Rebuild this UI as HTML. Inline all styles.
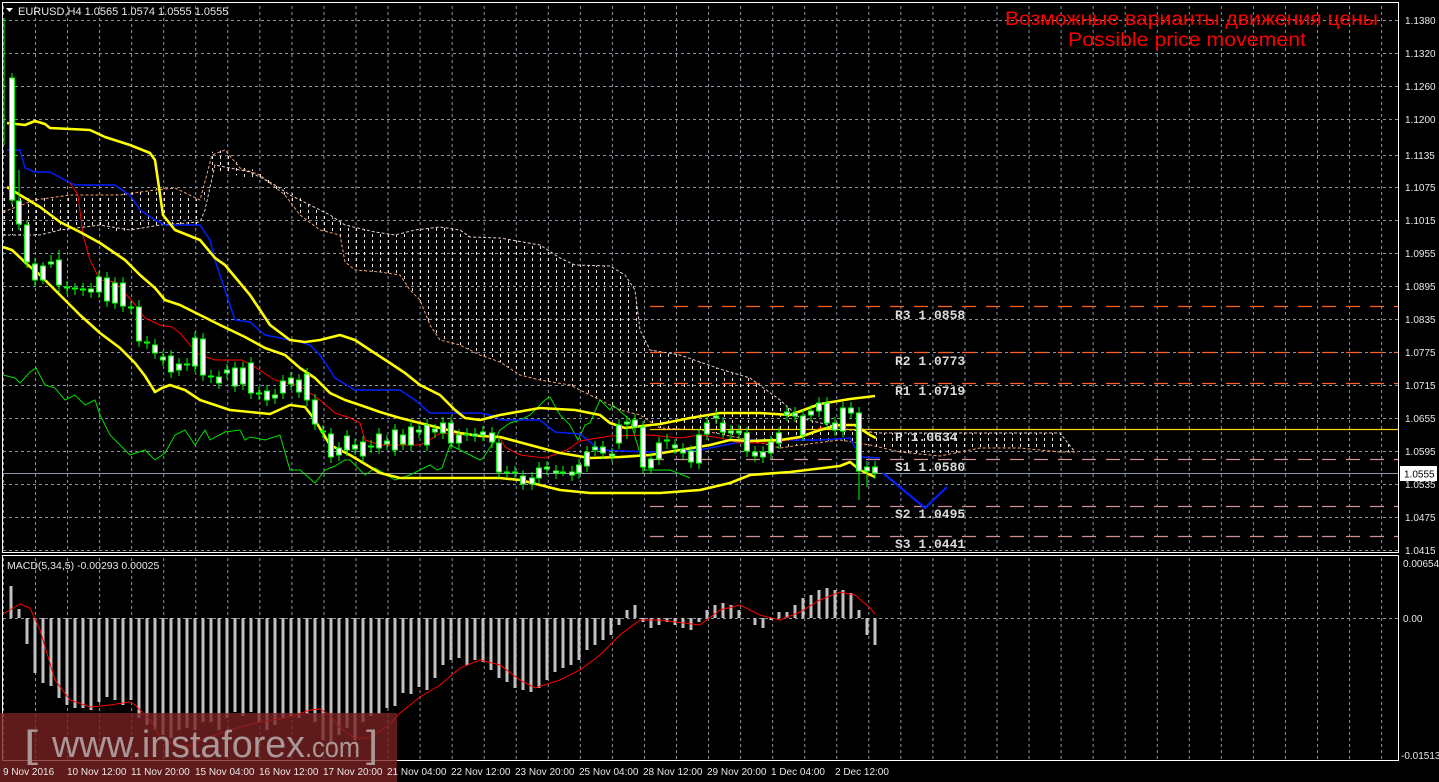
<!DOCTYPE html>
<html><head><meta charset="utf-8"><style>
html,body{margin:0;padding:0;background:#000;}
svg{display:block;font-family:"Liberation Sans",sans-serif;}
</style></head><body>
<svg width="1439" height="782" viewBox="0 0 1439 782" xmlns="http://www.w3.org/2000/svg">
<defs>
<pattern id="vg" patternUnits="userSpaceOnUse" x="35" y="0" width="32.05" height="782">
<line x1="0.5" y1="0" x2="0.5" y2="782" stroke="#8a96a6" stroke-width="1" stroke-dasharray="3,3"/>
</pattern>
<pattern id="hatch" patternUnits="userSpaceOnUse" x="0" y="0" width="8" height="6">
<line x1="4.5" y1="0" x2="4.5" y2="3" stroke="#ece4e0" stroke-width="1"/>
</pattern>
</defs>
<rect width="1439" height="782" fill="#000"/>
<rect x="3" y="3" width="1395" height="549" fill="url(#vg)"/>
<rect x="3" y="556" width="1395" height="204" fill="url(#vg)"/>
<g stroke="#8a96a6" stroke-width="1" stroke-dasharray="3,3">
<line x1="3" x2="1398" y1="20.5" y2="20.5"/><line x1="3" x2="1398" y1="53.5" y2="53.5"/><line x1="3" x2="1398" y1="86.5" y2="86.5"/><line x1="3" x2="1398" y1="119.5" y2="119.5"/><line x1="3" x2="1398" y1="155.5" y2="155.5"/><line x1="3" x2="1398" y1="187.5" y2="187.5"/><line x1="3" x2="1398" y1="220.5" y2="220.5"/><line x1="3" x2="1398" y1="253.5" y2="253.5"/><line x1="3" x2="1398" y1="286.5" y2="286.5"/><line x1="3" x2="1398" y1="319.5" y2="319.5"/><line x1="3" x2="1398" y1="352.5" y2="352.5"/><line x1="3" x2="1398" y1="385.5" y2="385.5"/><line x1="3" x2="1398" y1="418.5" y2="418.5"/><line x1="3" x2="1398" y1="451.5" y2="451.5"/><line x1="3" x2="1398" y1="484.5" y2="484.5"/><line x1="3" x2="1398" y1="517.5" y2="517.5"/><line x1="3" x2="1398" y1="550.5" y2="550.5"/>
<line x1="3" x2="1398" y1="618.5" y2="618.5"/>
</g>
<polygon points="3,195 30,195 60,200 70,195 110,195 150,190 160,187 200,200 205,190 210,152 225,150 240,165 260,172 280,185 300,198 320,210 345,225 375,232 395,235 415,230 440,227 460,230 470,237 500,238 540,245 560,258 575,265 610,266 625,275 635,290 640,330 650,350 680,355 720,369 750,378 780,400 800,418 850,430 880,433 1060,433 1075,452 1020,448 980,448 940,456 900,452 870,445 840,440 800,445 780,448 750,440 700,430 660,428 645,420 640,415 620,410 600,400 570,385 540,380 520,375 500,362 480,355 460,345 440,340 430,325 420,300 410,290 400,275 380,272 355,270 345,262 340,235 320,230 300,215 285,195 260,180 235,175 213,170 208,180 200,225 160,225 130,230 115,232 100,225 60,230 40,235 3,235" fill="url(#hatch)" stroke="none"/>
<polyline points="3,212 35,200 70,195 120,195 155,190 175,188 200,200 208,170 212,155 225,150 240,168 260,175 285,195 300,215 320,230 340,235 345,262 355,270 380,272 400,275 410,290 420,300 430,325 440,340 460,345 480,355 500,362 520,375 540,380 570,385 600,400 620,410 640,415 660,428 700,430 750,440 780,448 800,445 840,440 870,445 900,452 940,456 980,448 1020,448 1060,452 1075,452" fill="none" stroke="#f0a070" stroke-width="1" stroke-dasharray="3,2"/>
<polyline points="3,235 40,235 60,230 100,225 130,230 160,225 200,222 205,210 215,165 250,172 275,185 290,195 310,205 330,215 345,225 375,232 395,235 415,230 440,227 460,230 470,237 500,238 540,245 560,258 575,265 610,266 625,275 635,290 640,330 650,350 680,355 720,369 750,378 780,400 800,418 850,430 880,433 1060,433 1075,452" fill="none" stroke="#e8d0c8" stroke-width="1" stroke-dasharray="3,2"/>
<g stroke-width="1.3" stroke-dasharray="14,10">
<line x1="650" x2="1398" y1="306.5" y2="306.5" stroke="#ff6020"/>
<line x1="650" x2="1398" y1="352.5" y2="352.5" stroke="#ff6020"/>
<line x1="650" x2="1398" y1="383.5" y2="383.5" stroke="#ff6020"/>
<line x1="650" x2="1398" y1="459.5" y2="459.5" stroke="#d09090"/>
<line x1="650" x2="1398" y1="506.5" y2="506.5" stroke="#d09090"/>
<line x1="650" x2="1398" y1="536.5" y2="536.5" stroke="#d09090"/>
</g>
<line x1="650" x2="1398" y1="429.5" y2="429.5" stroke="#ffd000" stroke-width="1.2"/>
<line x1="3" x2="1398" y1="473.5" y2="473.5" stroke="#8a96a6" stroke-width="1"/>
<polyline points="3,375 15,378 20,383 30,372 36,368 45,385 55,388 65,400 75,395 85,405 95,400 100,415 110,435 120,445 130,455 145,450 155,460 165,453 175,435 185,430 195,445 205,430 210,440 225,432 240,430 245,440 250,437 265,440 280,435 290,470 300,470 315,483 325,470 335,466 345,460 350,460 355,465 365,475 375,468 382,472 395,480 410,475 420,470 430,465 437,470 442,468 450,445 460,450 480,460 483,458 495,440 500,430 510,423 520,420 530,415 545,400 550,397 560,415 570,425 578,440 585,425 590,423 600,400 610,410 613,405 630,420 645,470 670,470 690,478" fill="none" stroke="#00e000" stroke-width="1"/>
<polyline points="7,150 20,150 25,168 35,172 50,172 65,180 75,185 115,185 125,192 130,195 140,210 155,220 165,225 200,225 210,240 215,260 225,290 235,320 250,322 265,335 300,342 310,345 320,355 330,370 335,378 355,390 400,390 415,400 430,413 480,413 495,416 500,420 540,420 555,432 580,434 600,450 650,452 700,450 750,440 820,440 850,438 860,457 880,458" fill="none" stroke="#0020ff" stroke-width="1.5"/>
<polyline points="70,183 78,195 83,235 90,260 100,280 115,282 133,302 145,318 160,325 172,327 180,333 190,345 200,355 215,360 242,360 255,367 275,380 300,386 320,400 335,413 350,418 360,423 365,440 380,445 420,445 430,440 440,433 500,438 505,447 520,455 545,458 567,450 580,441 610,436 650,435 680,438 700,435 720,438 740,443 770,443 800,438 820,428 840,426 855,425 862,445" fill="none" stroke="#ff0000" stroke-width="1"/>
<g fill="none" stroke="#ffff00" stroke-width="2.6" stroke-linejoin="round">
<polyline points="7,123 25,125 35,121 45,124 50,128 90,130 105,137 130,145 150,153 155,160 163,215 175,230 200,240 215,258 225,265 250,295 260,310 270,325 290,340 305,342 320,340 340,335 355,340 370,350 390,363 405,373 420,385 440,395 455,410 465,418 480,420 500,415 540,408 575,410 600,415 610,423 625,428 660,424 690,418 720,413 760,413 790,415 820,404 850,399 875,396"/>
<polyline points="7,187 20,195 40,207 60,222 80,232 100,243 125,260 140,275 155,288 165,300 180,305 200,315 220,325 245,337 265,348 285,355 300,368 315,378 330,393 345,400 360,405 380,412 400,418 420,423 440,428 460,433 480,436 500,437 530,445 560,453 590,458 620,457 650,455 680,450 710,445 730,440 750,441 780,440 800,437 820,430 840,425 855,425 870,435 876,438"/>
<polyline points="3,247 12,250 28,265 40,275 60,295 80,315 100,333 120,348 135,363 145,376 155,392 162,388 170,385 185,390 200,400 230,410 260,413 270,414 290,405 305,407 315,420 330,445 350,455 380,473 400,478 500,478 520,480 540,485 560,490 590,493 660,493 700,490 730,483 750,475 790,472 840,466 850,462 860,470 875,477"/>
</g>
<path fill="none" stroke="#00ff00" stroke-width="1" d="M4,18V145M12,73V205M19,170V230M27,220V268M35,258V286M43,262V284M51,255V268M59,250V292M67,281V294M75,283V295M83,283V296M91,283V298M99,271V298M107,272V307M115,277V309M123,277V312M131,301V314M139,300V347M147,336V349M155,339V359M163,351V366M171,350V378M179,358V376M187,358V371M195,332V372M203,333V381M211,370V383M219,371V389M227,364V379M235,362V392M243,362V390M251,357V399M259,387V400M267,385V406M275,389V404M283,375V399M291,372V390M299,374V398M307,368V406M315,394V430M323,425V438M331,428V463M339,442V461M347,430V456M355,439V455M363,436V462M371,440V453M379,428V454M387,435V450M395,424V456M403,429V450M411,421V451M419,424V438M427,419V451M435,424V438M443,417V439M451,417V449M459,429V449M467,428V441M475,428V442M483,426V441M492,427V448M499,437V478M507,466V478M515,466V478M523,470V490M532,472V490M539,462V484M547,461V475M556,465V479M563,466V476M572,466V481M579,459V479M587,446V472M595,441V456M603,441V459M612,448V462M619,419V449M627,416V439M635,414V433M643,421V473M651,453V474M659,437V465M667,434V449M675,439V454M683,443V459M691,445V468M699,429V469M707,417V440M716,410V424M723,417V438M731,425V439M739,425V439M747,427V457M755,446V462M763,446V463M771,436V459M779,427V449M787,406V421M795,407V422M803,410V441M811,405V421M819,397V417M827,397V429M835,417V436M843,402V437M851,402V419M859,407V500M867,461V487M875,461V479"/>
<path fill="#fff" stroke="#00ff00" stroke-width="1" d="M9.5,78h5v122h-5zM16.5,201h5v23h-5zM24.5,225h5v37h-5zM32.5,264h5v16h-5zM40.5,266h5v14h-5zM48.5,262h5v2h-5zM56.5,260h5v25h-5zM64.5,287h5v1h-5zM72.5,288h5v1h-5zM80.5,289h5v1h-5zM88.5,289h5v3h-5zM96.5,277h5v15h-5zM104.5,278h5v23h-5zM112.5,283h5v20h-5zM120.5,283h5v23h-5zM128.5,307h5v1h-5zM136.5,307h5v34h-5zM144.5,342h5v1h-5zM152.5,345h5v8h-5zM160.5,357h5v3h-5zM168.5,356h5v16h-5zM176.5,364h5v6h-5zM184.5,364h5v1h-5zM192.5,338h5v28h-5zM200.5,339h5v36h-5zM208.5,376h5v1h-5zM216.5,377h5v6h-5zM224.5,370h5v3h-5zM232.5,368h5v18h-5zM240.5,368h5v16h-5zM248.5,363h5v30h-5zM256.5,393h5v1h-5zM264.5,391h5v9h-5zM272.5,395h5v3h-5zM280.5,381h5v12h-5zM288.5,378h5v6h-5zM296.5,380h5v12h-5zM304.5,374h5v26h-5zM312.5,400h5v24h-5zM320.5,431h5v1h-5zM328.5,434h5v23h-5zM336.5,448h5v7h-5zM344.5,436h5v14h-5zM352.5,445h5v4h-5zM360.5,442h5v14h-5zM368.5,446h5v1h-5zM376.5,434h5v14h-5zM384.5,441h5v3h-5zM392.5,430h5v20h-5zM400.5,435h5v9h-5zM408.5,427h5v18h-5zM416.5,430h5v2h-5zM424.5,425h5v20h-5zM432.5,429h5v3h-5zM440.5,423h5v10h-5zM448.5,423h5v20h-5zM456.5,435h5v8h-5zM464.5,434h5v1h-5zM472.5,434h5v2h-5zM480.5,432h5v3h-5zM489.5,433h5v9h-5zM496.5,443h5v29h-5zM504.5,472h5v1h-5zM512.5,472h5v1h-5zM520.5,476h5v8h-5zM529.5,478h5v6h-5zM536.5,468h5v10h-5zM544.5,467h5v2h-5zM553.5,471h5v2h-5zM560.5,472h5v1h-5zM569.5,472h5v3h-5zM576.5,465h5v8h-5zM584.5,452h5v14h-5zM592.5,447h5v3h-5zM600.5,447h5v6h-5zM609.5,454h5v2h-5zM616.5,425h5v18h-5zM624.5,422h5v2h-5zM632.5,420h5v7h-5zM640.5,427h5v40h-5zM648.5,459h5v9h-5zM656.5,443h5v16h-5zM664.5,440h5v1h-5zM672.5,445h5v3h-5zM680.5,449h5v4h-5zM688.5,451h5v11h-5zM696.5,435h5v28h-5zM704.5,423h5v11h-5zM713.5,416h5v2h-5zM720.5,423h5v9h-5zM728.5,431h5v2h-5zM736.5,431h5v2h-5zM744.5,433h5v18h-5zM752.5,452h5v4h-5zM760.5,452h5v5h-5zM768.5,442h5v11h-5zM776.5,433h5v10h-5zM784.5,412h5v3h-5zM792.5,413h5v3h-5zM800.5,416h5v19h-5zM808.5,411h5v4h-5zM816.5,403h5v8h-5zM824.5,403h5v20h-5zM832.5,423h5v7h-5zM840.5,408h5v23h-5zM848.5,408h5v5h-5zM856.5,413h5v58h-5zM864.5,467h5v4h-5zM872.5,467h5v6h-5z"/>
<polyline points="883,473 925,508 947,487" fill="none" stroke="#0020ff" stroke-width="2.2"/>
<g style="font-family:'Liberation Mono',monospace;font-size:13px;font-weight:bold" fill="#dcdcdc">
<text x="895" y="319">R3 1.0858</text>
<text x="895" y="365">R2 1.0773</text>
<text x="895" y="395">R1 1.0719</text>
<text x="895" y="441"> P 1.0634</text>
<text x="895" y="471">S1 1.0580</text>
<text x="895" y="518">S2 1.0495</text>
<text x="895" y="548">S3 1.0441</text>
</g>
<path fill="none" stroke="#c0c0c0" stroke-width="3" d="M11,618V586M19,618V609M27,618V644M35,618V673M43,618V683M51,618V686M59,618V698M67,618V705M75,618V708M83,618V708M91,618V710M99,618V702M107,618V697M115,618V700M123,618V705M131,618V700M139,618V718M147,618V725M155,618V730M163,618V735M171,618V738M179,618V730M187,618V728M195,618V730M203,618V722M211,618V722M219,618V730M227,618V718M235,618V712M243,618V716M251,618V712M259,618V722M267,618V730M275,618V725M283,618V718M291,618V716M299,618V718M307,618V714M315,618V722M323,618V740M331,618V745M339,618V735M347,618V728M355,618V740M363,618V722M371,618V716M379,618V714M387,618V708M395,618V706M403,618V693M411,618V694M419,618V687M427,618V690M435,618V678M443,618V665M451,618V660M459,618V658M467,618V665M475,618V660M483,618V662M491,618V670M499,618V678M507,618V682M515,618V688M523,618V690M531,618V692M539,618V688M547,618V680M555,618V672M563,618V668M571,618V665M579,618V660M587,618V650M595,618V645M603,618V640M611,618V635M619,618V625M627,618V610M635,618V605M643,618V622M651,618V628M659,618V625M667,618V622M675,618V625M683,618V628M691,618V630M699,618V622M707,618V610M715,618V605M723,618V603M731,618V605M739,618V610M747,618V618M755,618V625M763,618V628M771,618V620M779,618V612M787,618V612M795,618V605M803,618V598M811,618V595M819,618V590M827,618V588M835,618V590M843,618V590M851,618V593M859,618V610M867,618V635M875,618V645"/>
<polyline points="3,614 20,604 30,608 40,630 55,680 70,700 90,707 100,706 110,705 130,702 135,705 150,720 160,737 175,745 190,746 200,740 230,730 260,722 290,717 310,710 320,709 330,715 340,728 355,738 370,738 390,724 400,713 420,697 440,685 460,668 480,660 500,665 520,680 535,688 560,680 580,670 600,655 620,635 640,620 660,620 700,625 720,610 740,605 760,615 780,620 800,612 820,600 840,592 855,595 870,608 875,614" fill="none" stroke="#ff0000" stroke-width="1"/>
<text x="7" y="569" font-size="10.5" fill="#e8e8e8">MACD(5,34,5) -0.00293 0.00025</text>
<rect x="2.5" y="2.5" width="1396" height="550" fill="none" stroke="#fff" stroke-width="1"/>
<rect x="2.5" y="555.5" width="1396" height="205" fill="none" stroke="#fff" stroke-width="1"/>
<rect x="0" y="713" width="397" height="69" fill="#7a2222" fill-opacity="0.78"/>
<g fill="#aa9898">
<text x="24" y="757" font-size="38" textLength="14" lengthAdjust="spacingAndGlyphs">[</text>
<text x="52" y="757" font-size="38" textLength="253" lengthAdjust="spacingAndGlyphs">www.instaforex</text>
<text x="305" y="757" font-size="29" textLength="55" lengthAdjust="spacingAndGlyphs">.com</text>
<text x="366" y="757" font-size="38" textLength="12" lengthAdjust="spacingAndGlyphs">]</text>
</g>
<polygon points="6,8 13,8 9.5,12" fill="#fff"/>
<text x="18" y="15" font-size="11" fill="#e8e8e8">EURUSD,H4  1.0565 1.0574 1.0555 1.0555</text>
<text x="1005" y="25" font-size="19" fill="#ff0000" textLength="373" lengthAdjust="spacingAndGlyphs">Возможные варианты движения цены</text>
<text x="1068" y="46" font-size="19" fill="#ff0000" textLength="238" lengthAdjust="spacingAndGlyphs">Possible price movement</text>
<g font-size="10" fill="#e8e8e8">
<text x="1405" y="24">1.1380</text><text x="1405" y="57">1.1320</text><text x="1405" y="90">1.1260</text><text x="1405" y="123">1.1200</text><text x="1405" y="159">1.1135</text><text x="1405" y="191">1.1075</text><text x="1405" y="224">1.1015</text><text x="1405" y="257">1.0955</text><text x="1405" y="290">1.0895</text><text x="1405" y="323">1.0835</text><text x="1405" y="356">1.0775</text><text x="1405" y="389">1.0715</text><text x="1405" y="422">1.0655</text><text x="1405" y="455">1.0595</text><text x="1405" y="488">1.0535</text><text x="1405" y="521">1.0475</text><text x="1405" y="554">1.0415</text>
<text x="1403" y="567">0.00654</text><text x="1403" y="622">0.00</text><text x="1401" y="759">-0.01513</text>
</g>
<rect x="1400" y="466" width="37" height="15" fill="#fff"/>
<text x="1404" y="477.5" font-size="10" fill="#000">1.0555</text>
<g font-size="10" fill="#e8e8e8">
<text x="3" y="775">9 Nov 2016</text><text x="67" y="775">10 Nov 12:00</text><text x="131" y="775">11 Nov 20:00</text><text x="195" y="775">15 Nov 04:00</text><text x="259" y="775">16 Nov 12:00</text><text x="323" y="775">17 Nov 20:00</text><text x="387" y="775">21 Nov 04:00</text><text x="451" y="775">22 Nov 12:00</text><text x="515" y="775">23 Nov 20:00</text><text x="579" y="775">25 Nov 04:00</text><text x="643" y="775">28 Nov 12:00</text><text x="707" y="775">29 Nov 20:00</text><text x="771" y="775">1 Dec 04:00</text><text x="835" y="775">2 Dec 12:00</text>
</g>
</svg>
</body></html>
